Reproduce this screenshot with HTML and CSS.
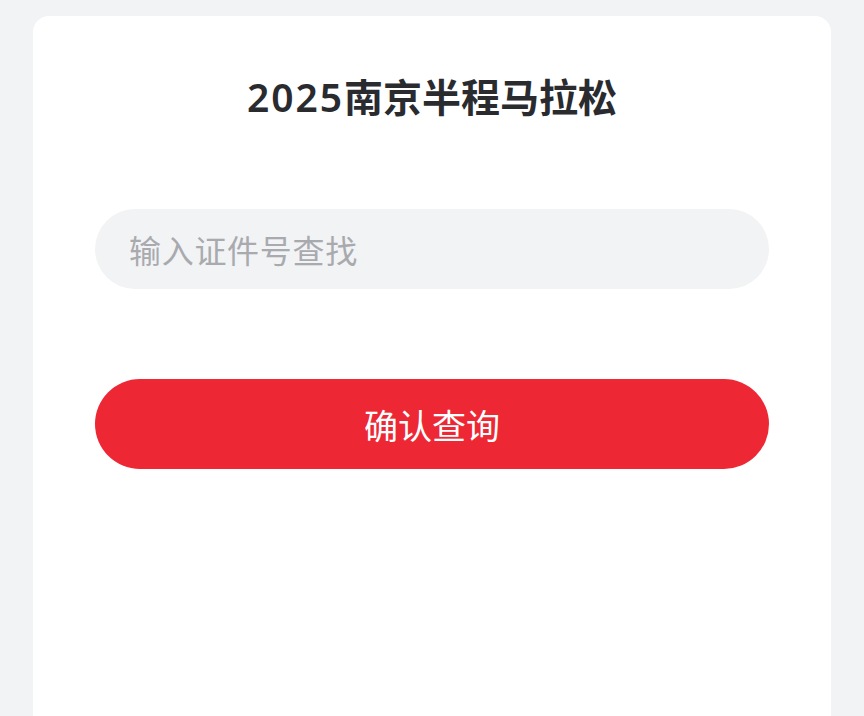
FILE: index.html
```html
<!DOCTYPE html>
<html lang="zh-CN">
<head>
  <meta charset="UTF-8">
  <meta name="viewport" content="width=device-width, initial-scale=1.0">
  <title>2025南京半程马拉松</title>
  <link rel="stylesheet" href="styles.css">
</head>
<body>
  <div id="wrap">
    <div class="card">
      <h1 class="title"><span class="year">2025</span>南京半程马拉松</h1>
      <div class="search">
        <input type="text" class="search-input" placeholder="输入证件号查找">
      </div>
      <button class="btn">确认查询</button>
    </div>
  </div>
</body>
</html>
```

FILE: styles.css
```css
* { margin: 0; padding: 0; box-sizing: border-box; }
body {
  width: 100%;
  height: 100vh;
  background: #f2f3f5;
  font-family: "Noto Sans CJK SC", "Noto Sans", sans-serif;
  overflow: hidden;
}
#wrap {
  width: 100%;
  height: 100vh;
  padding: 16px 33px 0;
  display: flex;
}
.card {
  flex: 1;
  background: #fff;
  border-radius: 16px 16px 0 0;
  padding: 61px 62px 0;
  display: flex;
  flex-direction: column;
}
.title {
  font-family: "Noto Sans", "Noto Sans CJK SC", sans-serif;
  font-size: 39px;
  line-height: 40px;
  font-weight: 600;
  color: #2a2b2f;
  text-align: center;
  margin-bottom: 92px;
}
.title .year {
  letter-spacing: 2px;
}
.search-input {
  display: block;
  width: 100%;
  height: 80px;
  border: 0;
  outline: none;
  border-radius: 40px;
  background: #f2f3f5;
  padding: 0 34px;
  font-family: inherit;
  font-size: 32px;
  letter-spacing: 0.7px;
  color: #2a2b2f;
}
.search-input::placeholder {
  color: #a9aaae;
}
.btn {
  margin-top: 90px;
  height: 90px;
  border: 0;
  border-radius: 45px;
  background: #ee2734;
  color: #fff;
  font-family: inherit;
  font-size: 34px;
}
```
